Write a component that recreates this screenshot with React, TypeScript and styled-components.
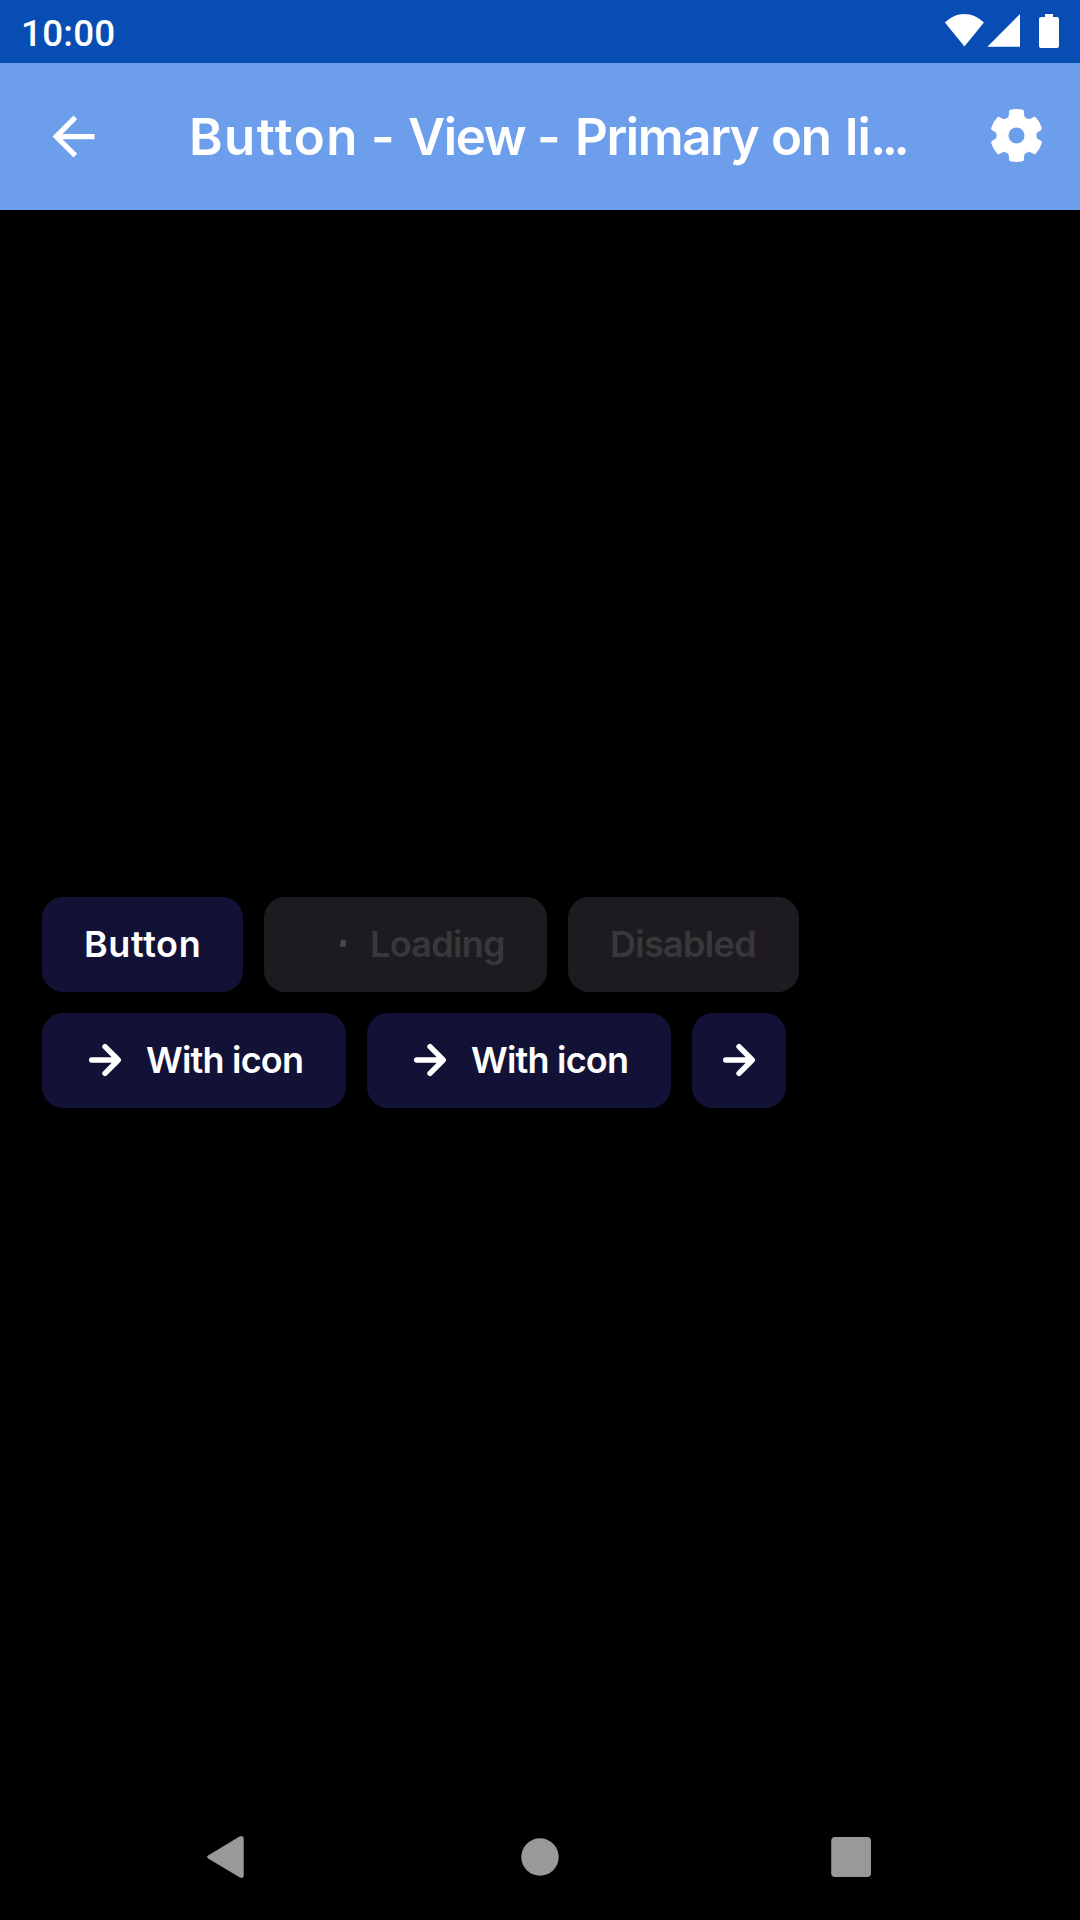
import React from "react";
import styled, { createGlobalStyle } from "styled-components";

const GlobalStyle = createGlobalStyle`
  * { box-sizing: border-box; }
  body { margin: 0; background: #000; }
`;

const Screen = styled.div`
  width: 1080px;
  height: 1920px;
  display: flex;
  flex-direction: column;
  background: #000;
  overflow: hidden;
  font-family: Inter, "Liberation Sans", sans-serif;
`;

const StatusBar = styled.header`
  height: 63px;
  flex: none;
  display: flex;
  align-items: center;
  justify-content: space-between;
  padding: 4px 20px 0 21px;
  background: #074db3;
  color: #fff;
`;

const Clock = styled.span`
  font: 500 36.75px/44px Roboto, sans-serif;
  letter-spacing: 0.25px;
`;

const StatusIcons = styled.svg`
  display: block;
  width: 116px;
  height: 36px;
  margin-top: -5px;
`;

const AppBar = styled.div`
  height: 147px;
  flex: none;
  display: flex;
  align-items: center;
  padding: 0 32px 0 42px;
  background: #6c9eeb;
  color: #fff;
`;

const BarButton = styled.button`
  display: flex;
  width: 63px;
  height: 63px;
  padding: 0;
  border: 0;
  background: none;
  color: inherit;
`;

const Title = styled.h1`
  flex: 1;
  display: flex;
  margin: 0 0 0 84px;
  font-size: 51px;
  line-height: 62px;
  font-weight: 600;
  white-space: pre;
`;

const Word = styled.span<{ $width: number; $spacing?: number }>`
  flex: none;
  width: ${(p) => p.$width}px;
  letter-spacing: ${(p) => p.$spacing ?? 0}px;
`;

const Content = styled.main`
  flex: 1;
  display: flex;
  flex-direction: column;
  justify-content: center;
  gap: 21px;
  padding: 0 42px;
`;

const ButtonRow = styled.div`
  display: flex;
  gap: 21px;
`;

const ActionButton = styled.button<{ $width: number; $muted?: boolean; $iconOnly?: boolean; $spacing?: number; $gap?: number }>`
  width: ${(p) => p.$width}px;
  height: 95px;
  flex: none;
  display: flex;
  align-items: center;
  justify-content: ${(p) => (p.$iconOnly ? "center" : "flex-start")};
  gap: ${(p) => p.$gap ?? 21}px;
  padding: ${(p) => (p.$iconOnly ? "0" : "0 0 0 42px")};
  border: 0;
  border-radius: 21px;
  background: ${(p) => (p.$muted ? "#1e1b20" : "#121236")};
  color: ${(p) => (p.$muted ? "#38383a" : "#fff")};
  font: 600 36px/44px Inter, "Liberation Sans", sans-serif;
  letter-spacing: ${(p) => p.$spacing ?? 0}px;
  white-space: nowrap;
`;

const SmallIcon = styled.svg`
  display: block;
  flex: none;
  width: 42px;
  height: 42px;
`;

const NavBar = styled.nav`
  height: 126px;
  flex: none;
  display: flex;
  align-items: center;
  justify-content: space-between;
  padding: 0 206px 0 204px;
  color: #999;
`;

const NavIcon = styled.svg`
  display: block;
  width: 44px;
  height: 44px;
`;

const polar = (deg: number, r: number) => {
  const a = (deg * Math.PI) / 180;
  return `${(Math.sin(a) * r).toFixed(2)} ${(-Math.cos(a) * r).toFixed(2)}`;
};

const gearPath =
  [0, 60, 120, 180, 240, 300]
    .map(
      (t, i) =>
        `${i ? "L" : "M"}${polar(t - 17.5, 24.8)} Q${polar(t - 17, 26.2)} ${polar(t - 13.5, 26.4)} ` +
        `Q${polar(t, 27.2)} ${polar(t + 13.5, 26.4)} Q${polar(t + 17, 26.2)} ${polar(t + 17.5, 24.8)} ` +
        `L${polar(t + 20.5, 21.8)} Q${polar(t + 22.5, 20.3)} ${polar(t + 26, 20.1)} ` +
        `Q${polar(t + 30, 19.7)} ${polar(t + 34, 20.1)} Q${polar(t + 37.5, 20.3)} ${polar(t + 39.5, 21.8)}`
    )
    .join(" ") + "Z M8 0A8 8 0 1 0 -8 0A8 8 0 1 0 8 0Z";

const ArrowIcon = () => (
  <SmallIcon viewBox="0 0 42 42" fill="none" stroke="currentColor" strokeWidth="5.4" strokeLinecap="round" strokeLinejoin="round">
    <path d="M7.7 21H34M21 7.7L34.3 21L21 34.3" />
  </SmallIcon>
);

export default function App() {
  return (
    <Screen>
      <GlobalStyle />
      <StatusBar>
        <Clock>10:00</Clock>
        <StatusIcons viewBox="0 0 116 36" fill="currentColor">
          <path d="M.9 9.6C6.4 4 13 .9 20.3 .9S34.400 4 39.900 9.600L20.400 33.600Z" />
          <path d="M43.400 33.700L76 1V33.700Z" />
          <path d="M101 1H109V4H113Q115 4 115 6V33Q115 35 113 35H97Q95 35 95 33V6Q95 4 97 4H101Z" />
        </StatusIcons>
      </StatusBar>
      <AppBar>
        <BarButton aria-label="Back">
          <svg width="63" height="63" viewBox="0 0 24 24" fill="currentColor">
            <path d="M20 11H7.830l5.590-5.590L12 4l-8 8 8 8 1.410-1.410L7.830 13H20v-2z" />
          </svg>
        </BarButton>
        <Title>
          <Word $width={182} $spacing={1.5}>Button</Word>
          <Word $width={37}>-</Word>
          <Word $width={129} $spacing={-1.4}>View</Word>
          <Word $width={38}>-</Word>
          <Word $width={196} $spacing={-1.4}>Primary</Word>
          <Word $width={74} $spacing={-1.2}>on</Word>
          <Word $width={25} $spacing={-0.8}>li</Word>
          <Word $width={36} $spacing={-4.5}>...</Word>
        </Title>
        <BarButton aria-label="Settings">
          <svg width="63" height="63" viewBox="-31.500 -30.500 63 63" fill="currentColor" fillRule="evenodd">
            <path d={gearPath} />
          </svg>
        </BarButton>
      </AppBar>
      <Content>
        <ButtonRow>
          <ActionButton $width={201} $spacing={0.6}>Button</ActionButton>
          <ActionButton $width={283} $gap={22} $spacing={-0.7} $muted disabled>
            <SmallIcon viewBox="0 0 42 42">
              <path d="M35 17H39.800V23.700H34Z" fill="#48474a" />
            </SmallIcon>
            Loading
          </ActionButton>
          <ActionButton $width={231} $spacing={-0.7} $muted disabled>Disabled</ActionButton>
        </ButtonRow>
        <ButtonRow>
          <ActionButton $width={304} $gap={20} $spacing={-0.8}><ArrowIcon />With icon</ActionButton>
          <ActionButton $width={304} $gap={20} $spacing={-0.8}><ArrowIcon />With icon</ActionButton>
          <ActionButton $width={94} $iconOnly aria-label="Next"><ArrowIcon /></ActionButton>
        </ButtonRow>
      </Content>
      <NavBar>
        <NavIcon viewBox="0 0 44 44" fill="currentColor">
          <path d="M4.500 20.300L35.500 1.500Q39.700 -.300 39.700 3.500V40.500Q39.700 44.300 35.500 42.200L4.500 23.700Q1.700 22 4.500 20.300Z" />
        </NavIcon>
        <NavIcon viewBox="0 0 44 44" fill="currentColor"><circle cx="23" cy="22" r="18.700" /></NavIcon>
        <NavIcon viewBox="0 0 44 44" fill="currentColor"><rect x="1.200" y="2" width="39.800" height="40" rx="4" /></NavIcon>
      </NavBar>
    </Screen>
  );
}
